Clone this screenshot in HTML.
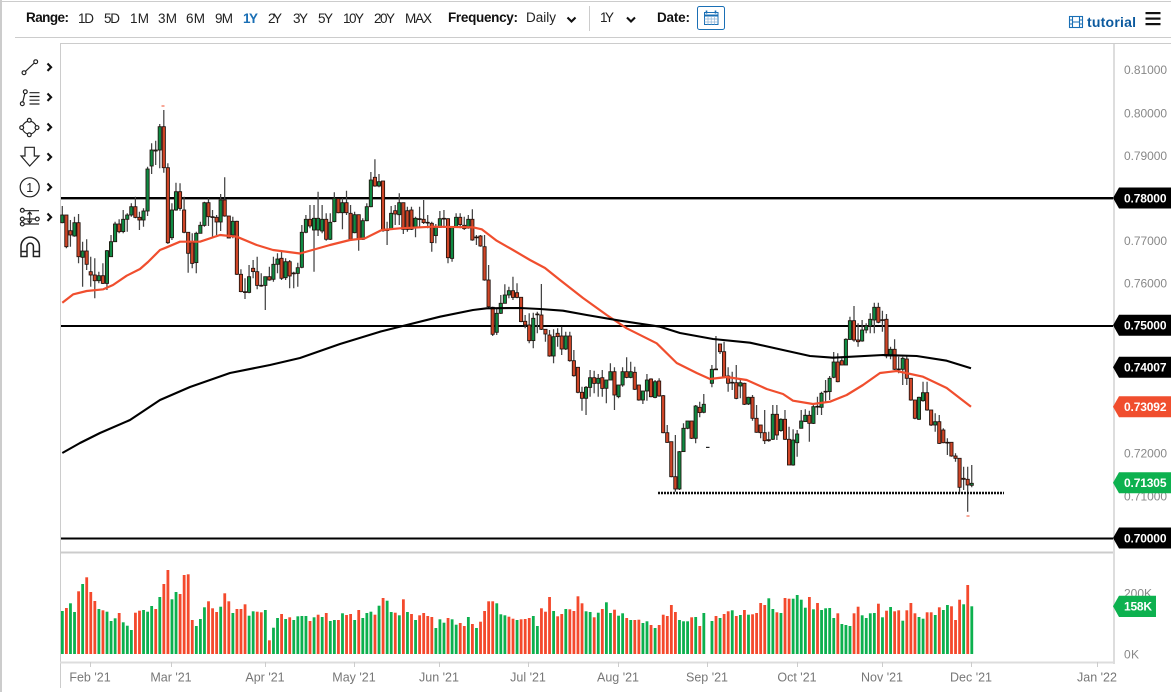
<!DOCTYPE html>
<html><head><meta charset="utf-8"><title>Chart</title>
<style>
html,body{margin:0;padding:0;background:#fff;width:1176px;height:692px;overflow:hidden}
svg{display:block;font-family:"Liberation Sans",Arial,sans-serif}
.t{font-size:13.5px;fill:#222}
.b{font-size:13.5px;font-weight:bold;fill:#111}
.y{font-size:12px;fill:#888}
.x{font-size:12.5px;fill:#777;text-anchor:middle}
.g{font-size:12px;font-weight:bold;fill:#fff}
.i{fill:none;stroke:#222;stroke-width:1.2}
.c{fill:none;stroke:#111;stroke-width:2.1}
</style></head><body>
<svg xmlns="http://www.w3.org/2000/svg" width="1176" height="692" viewBox="0 0 1176 692">
<rect width="1176" height="692" fill="#fff"/>
<!-- frame -->
<rect x="0" y="0" width="2" height="692" fill="#ccc"/>
<rect x="0" y="1" width="1171" height="1" fill="#ccc"/>
<rect x="15" y="37" width="1156" height="1" fill="#ccc"/>
<rect x="60" y="43" width="1111" height="1" fill="#ccc"/>
<rect x="60" y="43" width="1" height="645" fill="#ccc"/>
<rect x="1113" y="44" width="2" height="620" fill="#ddd"/>
<rect x="60" y="551.5" width="1053" height="2" fill="#ccc"/>
<rect x="60" y="661.5" width="1055" height="2" fill="#ddd"/>
<!-- toolbar -->
<text class="b" x="26" y="22" textLength="43">Range:</text>
<text class="t" x="78" y="23" textLength="16">1D</text>
<text class="t" x="104" y="23" textLength="16">5D</text>
<text class="t" x="130" y="23" textLength="19">1M</text>
<text class="t" x="158" y="23" textLength="19">3M</text>
<text class="t" x="186" y="23" textLength="19">6M</text>
<text class="t" x="215" y="23" textLength="18">9M</text>
<text class="t" x="243" y="23" textLength="15" style="fill:#1a6fb5;font-weight:bold">1Y</text>
<text class="t" x="268" y="23" textLength="14">2Y</text>
<text class="t" x="293" y="23" textLength="15">3Y</text>
<text class="t" x="318" y="23" textLength="15">5Y</text>
<text class="t" x="343" y="23" textLength="21">10Y</text>
<text class="t" x="374" y="23" textLength="21">20Y</text>
<text class="t" x="405" y="23" textLength="27">MAX</text>
<text class="b" x="448" y="22" textLength="70">Frequency:</text>
<text class="t" x="526" y="22" textLength="30">Daily</text>
<path class="c" d="M567.5 17.5l4 4 4-4"/>
<rect x="589" y="6" width="1" height="25" fill="#ccc"/>
<text class="t" x="600" y="22" textLength="14">1Y</text>
<path class="c" d="M627 17.5l4 4 4-4"/>
<text class="b" x="657" y="22" textLength="33">Date:</text>
<rect x="697.5" y="6.5" width="27" height="23" rx="2" fill="#fff" stroke="#1a6fb5" stroke-width="1"/>
<g fill="none" stroke="#1a6fb5" stroke-width="1">
<rect x="704.5" y="12.5" width="13.5" height="12"/>
<path d="M704.5 15.5h13.5" stroke-width="2"/>
<path d="M706.5 10.5v3M715.5 10.5v3" stroke-width="1.6"/>
<path d="M708 16v8.5M711.2 16v8.5M714.6 16v8.5M704.5 19h13.5M704.5 22h13.5" stroke="#8fb4d6" stroke-width=".7"/>
</g>
<g fill="none" stroke="#1a6fb5" stroke-width="1.1">
<rect x="1069.5" y="16.5" width="13" height="11"/>
<path d="M1072.5 16.5v11M1079.5 16.5v11M1072.5 22h7M1069.5 20h3M1069.5 24h3M1079.5 20h3M1079.5 24h3"/>
</g>
<text x="1087" y="27" font-size="14" font-weight="bold" fill="#0c5a9e" textLength="49">tutorial</text>
<rect x="1145.5" y="12" width="15" height="2.2" fill="#111"/>
<rect x="1145.5" y="17.5" width="15" height="2.2" fill="#111"/>
<rect x="1145.5" y="23" width="15" height="2.2" fill="#111"/>
<!-- left tools -->
<g class="i">
<circle cx="24" cy="72.7" r="1.9"/><circle cx="35.7" cy="61.7" r="1.9"/><path d="M25.5 71.3L34.3 63"/>
<circle cx="25.3" cy="91.7" r="1.9"/><circle cx="22.3" cy="103.7" r="1.9"/><path d="M24.8 93.6L22.8 101.8M29.5 92.7h10M29.5 96.5h10M29.5 100.2h10M29.5 104h10"/>
<circle cx="29.3" cy="120.3" r="1.9"/><circle cx="29.3" cy="134.8" r="1.9"/><circle cx="21.7" cy="127.6" r="1.9"/><circle cx="37" cy="127.6" r="1.9"/>
<path d="M27.6 121.3Q24 122.5 22.6 125.9M31 121.3Q34.6 122.5 36 125.9M22.6 129.3Q24 132.7 27.6 133.9M36 129.3Q34.6 132.7 31 133.9"/>
<path d="M25 147.3h9.3V156H39L29.7 166 21 156h4z"/>
<circle cx="29.7" cy="187.3" r="9.5"/>
<circle cx="22.3" cy="210.3" r="1.9"/><circle cx="22.3" cy="219" r="1.9"/><circle cx="22.3" cy="224" r="1.9"/><circle cx="37.3" cy="219" r="1.9"/>
<path d="M24.3 210.7H39M24.3 219H35.4M24.3 224H39M29.7 212v11"/>
<path d="M27.6 214.5l2.1-2.5 2.1 2.5M27.6 220.5l2.1 2.5 2.1-2.5" />
<path stroke-width="1.5" d="M21 256.5V246.3a9.2 9.2 0 0 1 18.4 0V256.5H33.4V246.3a3.2 3.2 0 0 0-6.4 0V256.5ZM21 251.5h6M33.4 251.5h6"/>
</g>
<text x="29.7" y="191.8" font-size="12.5" fill="#222" text-anchor="middle">1</text>
<g class="c">
<path d="M47.5 63.5l3.6 3.7-3.6 3.7"/>
<path d="M47.5 93.5l3.6 3.7-3.6 3.7"/>
<path d="M47.5 123.5l3.6 3.7-3.6 3.7"/>
<path d="M47.5 153.3l3.6 3.7-3.6 3.7"/>
<path d="M47.5 183.5l3.6 3.7-3.6 3.7"/>
<path d="M47.5 213.5l3.6 3.7-3.6 3.7"/>
</g>
<!-- volume + candles injected here -->
<g id="vol"></g>
<g id="mainlines">
<rect x="61" y="197" width="1052" height="2.4" fill="#000"/>
<rect x="61" y="325" width="1052" height="2" fill="#000"/>
<rect x="61" y="537.5" width="1052" height="2" fill="#000"/>
</g>
<g id="wicks" stroke="#444" stroke-width="1.25" fill="none" style="filter:blur(.3px)"></g>
<g id="bodies" stroke="#20120d" stroke-width=".85" style="filter:blur(.25px)"></g>
<polyline fill="none" stroke="#f04e2e" stroke-width="2.2" stroke-linejoin="round" points="62.3,302.7 73.3,294.3 86.7,291 103.3,289.3 113,285 126.7,275.7 140,269 148,262 160,250 166.7,247.3 180,241.7 200,241.7 220,235 236.7,236.7 256.7,245 273,250 300,253.5 330,245 350,240 365,238.3 381.7,230 400,228.3 433,226.7 473,227.3 481.7,229.3 496.7,240.7 513,250 530,260 545,268 560,280 583,298 606.7,315 626.7,328.3 656.7,343.3 676.7,363 696.7,373 710,379 726.7,377 746.7,380 766.7,389 783,394 793,400.7 813,404 830,401.7 846.7,395 863,385 880,373 896.7,371 923,376.7 946.7,388 971,406.7"/>
<polyline fill="none" stroke="#000" stroke-width="2.1" stroke-linejoin="round" points="62.3,453 80,443 100,433 130,420 160,400 190,387 230,373 270,365 300,358 340,344 380,331.7 406.7,325 440,316.7 473,310 486.7,308.3 520,308 540,309 563,310.7 586.7,315 620,320.7 660,326.7 680,333 713,339 750,342.7 783,350 810,356 833,357.7 883,355 916.7,356 946.7,360.7 971,368.3"/>
<line x1="658" y1="493" x2="1004" y2="493" stroke="#111" stroke-width="2.4" stroke-dasharray="2 1"/>
<rect x="161.5" y="105.5" width="3" height="1" fill="#f04e2e"/>
<rect x="966.5" y="515.5" width="3" height="1" fill="#f04e2e"/>
<rect x="706" y="446.8" width="3.5" height="1.2" fill="#222"/>
<!-- y axis -->
<g class="y">
<text x="1124" y="74" textLength="43">0.81000</text>
<text x="1124" y="117.3" textLength="43">0.80000</text>
<text x="1124" y="160" textLength="43">0.79000</text>
<text x="1124" y="245" textLength="43">0.77000</text>
<text x="1124" y="287.5" textLength="43">0.76000</text>
<text x="1124" y="457.5" textLength="43">0.72000</text>
<text x="1124" y="500.5" textLength="43">0.71000</text>
<text x="1124" y="597.3" textLength="28">200K</text>
<text x="1124" y="658.5" textLength="15">0K</text>
</g>
<!-- tags -->
<path fill="#000" d="M1113 198L1119 187.5H1171V208.5H1119Z"/>
<path fill="#000" d="M1113 325.3L1119 314.8H1171V335.8H1119Z"/>
<path fill="#000" d="M1113 367.3L1119 356.8H1171V377.8H1119Z"/>
<path fill="#f04e2e" d="M1113 406.7L1119 396.2H1171V417.2H1119Z"/>
<path fill="#0db14f" d="M1113 482.7L1119 472.2H1171V493.2H1119Z"/>
<path fill="#000" d="M1113 538L1119 527.5H1171V548.5H1119Z"/>
<path fill="#0db14f" d="M1113 606.3L1119 595.7H1156V617H1119Z"/>
<g class="g">
<text x="1124" y="202.3" textLength="42.5">0.78000</text>
<text x="1124" y="329.6" textLength="42.5">0.75000</text>
<text x="1124" y="371.6" textLength="42.5">0.74007</text>
<text x="1124" y="411" textLength="42.5">0.73092</text>
<text x="1124" y="487" textLength="42.5">0.71305</text>
<text x="1124" y="542.3" textLength="42.5">0.70000</text>
<text x="1124" y="610.6" textLength="28">158K</text>
</g>
<!-- x axis -->
<path stroke="#ccc" stroke-width="1" d="M90.5 662v5M171.5 662v5M265.5 662v5M354.5 662v5M439.5 662v5M528.5 662v5M618.5 662v5M707.5 662v5M797.5 662v5M882.5 662v5M971.5 662v5M1097.5 662v5"/>
<g class="x">
<text x="90" y="681.5">Feb '21</text>
<text x="171" y="681.5">Mar '21</text>
<text x="265" y="681.5">Apr '21</text>
<text x="354" y="681.5">May '21</text>
<text x="439" y="681.5">Jun '21</text>
<text x="528" y="681.5">Jul '21</text>
<text x="618" y="681.5">Aug '21</text>
<text x="707" y="681.5">Sep '21</text>
<text x="797" y="681.5">Oct '21</text>
<text x="882" y="681.5">Nov '21</text>
<text x="971" y="681.5">Dec '21</text>
<text x="1097" y="681.5">Jan '22</text>
</g>
</svg>
<script>
(function(){
var NS="http://www.w3.org/2000/svg";
function X(i){return 62.3+4.06*i}
var sections=[
[100,"G345 368 318 370;R345 440 345 445;R392 405 360 440;G368 408 350 410;R368 470 342 490;G453 472 425 560;R453 493 418 510;R515 525 470 560;R525 542 475 595;G527 542 515 550;R527 550 490 552;G452 550 450 570;G425 470 405 470;G372 425 365 425;R372 395 358 400;G358 395 330 400;G345 358 340 395;G320 345 310 350;R320 352 290 355;R352 360 335 390;G333 360 325 380;G207 333 200 348;G150 198 130 222;G150 153 122 195;G80 150 72 205;R80 203 30 218;R203 428 190 432;G330 413 310 420;G275 330 248 332;R275 325 250 332;R330 397 290 400;R397 460 397 518;R428 490 400 505;G400 488 395 520;G376 400 365 400;G308 376 305 380;R308 350 295 378;R350 352 330 410;R352 366 345 405;G300 366 282 393;R300 348 232 350;R348 414 348 414;G364 405 350 415;R364 523 362 525;R523 575 508 577;R575 577 535 597;G530 577 495 580;R505 515 480 535;R515 556 470 568;R556 558 520 560;G530 556 530 630;R530 540 500 542;G493 538 470 545;G477 493 460 520;R475 535 452 540;G485 533 475 540;R485 528 480 565;R519 521 515 565;G503 520 488 560"],
[150,"G247 352 225 355;G208 247 195 250;R208 228 165 235;G205 240 165 365;G205 240 125 258;G208 243 165 250;R208 268 190 272;G217 268 190 270;G145 215 127 217;R146 188 146 190;G158 188 145 238;R158 188 122 195;R190 268 165 272;G194 248 185 250;R194 268 194 302;G212 268 205 270;G170 212 160 214;G90 170 66 172;R82 108 28 110;G95 108 72 112;R93 242 93 245;R238 242 215 285;G190 238 168 240;R182 192 165 225;G158 194 130 225;R158 238 158 252;R182 238 170 245;R180 238 170 240;G205 234 200 262;R206 208 170 232;R208 218 150 222;R217 219 195 235;R220 278 215 305;G232 257 222 280;G206 232 183 234;R205 207 180 234;R206 323 205 340;G233 325 232 335;G202 230 190 232;R202 224 190 235;R226 236 200 240;G208 234 195 236;R208 270 178 272;G261 263 255 285;R258 288 255 290;R290 390 255 392;R390 470 345 475;R472 553 470 558;G490 547 475 555;G460 490 435 492;G435 460 403 460;G422 435 410 445;R422 442 380 450;R428 442 400 445;R442 515 442 517"],
[280,"R124 135 105 145;R135 182 100 190;G115 182 98 205;R102 104 95 160;R105 148 12 150;R148 162 148 185;R165 228 150 230;G170 228 148 250;R160 170 145 200;R168 207 140 225;G168 207 155 210;R168 242 155 245;R242 287 210 290;R262 337 262 340;R337 355 320 392;G322 355 318 405;G293 322 270 350;R293 310 272 340;G295 310 282 350;R293 325 270 350;G300 325 300 370;G275 300 250 300;R275 345 262 390;G315 350 315 355;G275 315 262 320;R275 292 232 295;G275 292 245 295;R277 328 260 330;R315 360 315 362;G333 360 333 372;G300 333 282 362;R297 350 295 352;G305 352 300 355;R303 348 295 350;R347 458 345 460;R458 487 435 488;R485 590 485 592;R590 627 465 635;G515 627 513 630;G445 515 430 515;G423 445 423 448;R423 475 423 477;G378 475 375 490;R382 398 365 412;G373 397 342 400;X;G268 310 255 322;G267 269 168 270;R192 215 192 222;R215 290 185 295;R288 310 262 335;G307 309 275 330;R308 355 255 358;G308 318 295 355;R310 373 308 375;G352 372 350 375"],
[290,"R322 385 315 392;R385 427 345 428;R405 428 405 445;R428 452 360 462;R449 452 425 455;G373 448 345 450;R373 435 345 450;G388 422 385 425;R388 448 360 450;R448 525 410 525;G450 525 418 527;G432 458 420 500;G393 415 360 415;G376 395 358 395;R376 400 362 455;G350 400 340 402;G349 351 320 375;G310 352 305 375;G304 306 270 335;G265 305 258 330;G216 262 186 265;R216 275 190 277;R212 225 205 225;G148 225 145 225;G92 148 80 150;R92 150 48 155;R150 155 100 170;G120 153 90 155;G108 120 100 130;G88 108 70 130;G52 90 38 130;R52 97 38 100;R89 91 62 125;R88 198 72 205;G178 198 170 208;R178 238 148 240;R237 239 200 250;G205 238 200 285;R207 265 198 285;R265 330 265 332;R330 385 330 388;G322 388 320 390;G308 332 275 335;R308 360 275 362;R360 405 360 408;G395 405 370 425;R395 460 375 462;R420 458 415 460;R457 459 445 495;R457 498 457 500;R498 505 490 515;R505 592 505 610;R565 568 530 600;R568 585 530 665;G580 586 525 592"]
];
var wicks=document.getElementById("wicks"),bodies=document.getElementById("bodies"),w="",i=0;
var GF="#0f8a43",RF="#cf4527";
sections.forEach(function(s){
  var base=s[0];
  s[1].split(";").forEach(function(r){
    if(r==="X"){i++;return;}
    var c=r.charAt(0),v=r.slice(1).split(" ").map(function(n){return base+parseFloat(n)/3;});
    var x=X(i);
    w+="M"+x.toFixed(2)+" "+v[2].toFixed(1)+"V"+Math.max(v[3],v[2]+1).toFixed(1);
    var h=Math.max(v[1]-v[0],.8);
    var b=document.createElementNS(NS,"rect");
    b.setAttribute("x",(x-1.6).toFixed(2));b.setAttribute("y",v[0].toFixed(1));
    b.setAttribute("width","3.2");b.setAttribute("height",h.toFixed(1));
    b.setAttribute("fill",c==="G"?GF:RF);
    bodies.appendChild(b);
    i++;
  });
});
var p=document.createElementNS(NS,"path");p.setAttribute("d",w);wicks.appendChild(p);
var V="G213 R204 G190 G216 R154 G132 R112 R156 R183 G207 R211 G215 G243 G235 R219 G247 G257 G270 R218 R212 G210 G215 G198 R207 G171 R132 R90 G178 G156 R162 R105 R103 R240 G258 G237 G202 R184 R205 R216 G200 R160 R184 G219 R207 R207 R193 G227 G214 R215 R217 G210 R301 G263 G234 R222 G237 R232 G240 G229 G228 G228 R243 G232 R224 G231 R219 G243 G240 R240 G220 R225 R222 G240 R210 G234 G219 G215 R224 G197 R174 G182 G216 R218 G226 R178 G216 R222 G240 R226 R219 R228 R231 G264 G238 G248 R234 G238 G254 R249 R258 G231 R252 G264 R245 R213 R184 R184 G190 G223 G226 R230 R236 G240 R238 R237 R234 G228 G258 R205 R215 R171 G213 R229 R222 G207 R208 R213 R169 R190 G214 G216 R232 G218 R207 G187 G219 R209 G227 G220 R234 G240 R240 R239 G249 G244 R255 G264 R255 R224 R228 R195 R216 G240 G244 G244 R232 G231 R258 G219 X G243 R228 G234 R222 R214 G211 R228 G225 R210 G224 R223 R219 R189 R195 G175 G207 R217 G219 R174 R176 G176 G165 G179 G203 R171 G208 R189 G210 G205 G204 G234 R220 G252 G255 G258 R220 R200 G226 G234 G220 G219 R191 G232 R212 G201 R214 R211 G242 R211 R189 R220 G231 G236 R217 R217 G225 R202 G210 G195 R199 R240 R179 G193 R135 G199".split(" ");
var vol=document.getElementById("vol");
V.forEach(function(r,k){
  if(r==="X")return;
  var top=540+parseFloat(r.slice(1))/3;
  var b=document.createElementNS(NS,"rect");
  b.setAttribute("x",(X(k)-1.35).toFixed(2));b.setAttribute("y",top.toFixed(1));
  b.setAttribute("width","2.8");b.setAttribute("height",(654-top).toFixed(1));
  b.setAttribute("fill",r.charAt(0)==="G"?"#0cb04e":"#f4492c");
  vol.appendChild(b);
});
})();
</script>
</body></html>
